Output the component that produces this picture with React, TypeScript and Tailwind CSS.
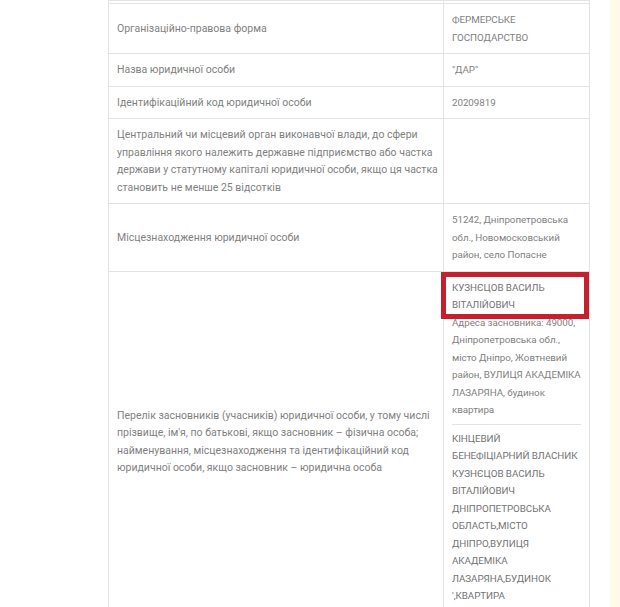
const cell = "border border-[#e3e3e3] px-2 py-[7px] align-middle";
const valueCell = "border border-[#e3e3e3] px-2 py-[7px] align-middle text-[9.8px] tracking-[-0.05px]";

const Lines = ({ lines }: { lines: string[] }) => (
  <>
    {lines.map((l, i) => (
      <span key={i} className="block whitespace-nowrap">
        {l}
      </span>
    ))}
  </>
);

const rows: { label: string[]; value: string[] }[] = [
  { label: ["Організаційно-правова форма"], value: ["ФЕРМЕРСЬКЕ", "ГОСПОДАРСТВО"] },
  { label: ["Назва юридичної особи"], value: ["\"ДАР\""] },
  { label: ["Ідентифікаційний код юридичної особи"], value: ["20209819"] },
  {
    label: [
      "Центральний чи місцевий орган виконавчої влади, до сфери",
      "управління якого належить державне підприємство або частка",
      "держави у статутному капіталі юридичної особи, якщо ця частка",
      "становить не менше 25 відсотків",
    ],
    value: [],
  },
  {
    label: ["Місцезнаходження юридичної особи"],
    value: ["51242, Дніпропетровська", "обл., Новомосковський", "район, село Попасне"],
  },
];

export default function App() {
  return (
    <div className="flex w-[620px] h-[607px] overflow-hidden bg-white text-[10.5px] leading-[17.5px] text-[#7f7f7f] font-['Roboto','Noto_Sans',sans-serif]">
      <div className="w-[108px] shrink-0" />
      <table className="w-[481px] shrink-0 table-fixed border-collapse self-start">
        <colgroup>
          <col className="w-[335px]" />
          <col className="w-[146px]" />
        </colgroup>
        <tbody>
          <tr>
            <td className="border border-[#e3e3e3] h-[3px] p-0" />
            <td className="border border-[#e3e3e3] h-[3px] p-0" />
          </tr>
          {rows.map((r, i) => (
            <tr key={i}>
              <td className={cell}>
                <Lines lines={r.label} />
              </td>
              <td className={valueCell}>
                <Lines lines={r.value} />
              </td>
            </tr>
          ))}
          <tr>
            <td className={cell}>
              <Lines
                lines={[
                  "Перелік засновників (учасників) юридичної особи, у тому числі",
                  "прізвище, ім'я, по батькові, якщо засновник – фізична особа;",
                  "найменування, місцезнаходження та ідентифікаційний код",
                  "юридичної особи, якщо засновник – юридична особа",
                ]}
              />
            </td>
            <td className={`${valueCell} relative`}>
              <div className="text-[#737373]">
                <Lines lines={["КУЗНЄЦОВ ВАСИЛЬ", "ВІТАЛІЙОВИЧ"]} />
              </div>
              <Lines
                lines={[
                  "Адреса засновника: 49000,",
                  "Дніпропетровська обл.,",
                  "місто Дніпро, Жовтневий",
                  "район, ВУЛИЦЯ АКАДЕМІКА",
                  "ЛАЗАРЯНА, будинок",
                  "квартира",
                ]}
              />
              <div className="my-[5px] border-t border-[#e3e3e3]" />
              <div className="text-[#737373]">
                <Lines
                  lines={[
                    "КІНЦЕВИЙ",
                    "БЕНЕФІЦІАРНИЙ ВЛАСНИК",
                    "КУЗНЄЦОВ ВАСИЛЬ",
                    "ВІТАЛІЙОВИЧ",
                    "ДНІПРОПЕТРОВСЬКА",
                    "ОБЛАСТЬ,МІСТО",
                    "ДНІПРО,ВУЛИЦЯ",
                    "АКАДЕМІКА",
                    "ЛАЗАРЯНА,БУДИНОК",
                    "',КВАРТИРА",
                  ]}
                />
              </div>
              <div className="absolute top-0 left-[-3px] w-[148px] h-[47px] border-[5px] border-[#c4212c]" />
            </td>
          </tr>
        </tbody>
      </table>
      <div className="flex-1" />
      <div className="w-[10px] shrink-0 bg-[#fefbe6]" />
    </div>
  );
}
